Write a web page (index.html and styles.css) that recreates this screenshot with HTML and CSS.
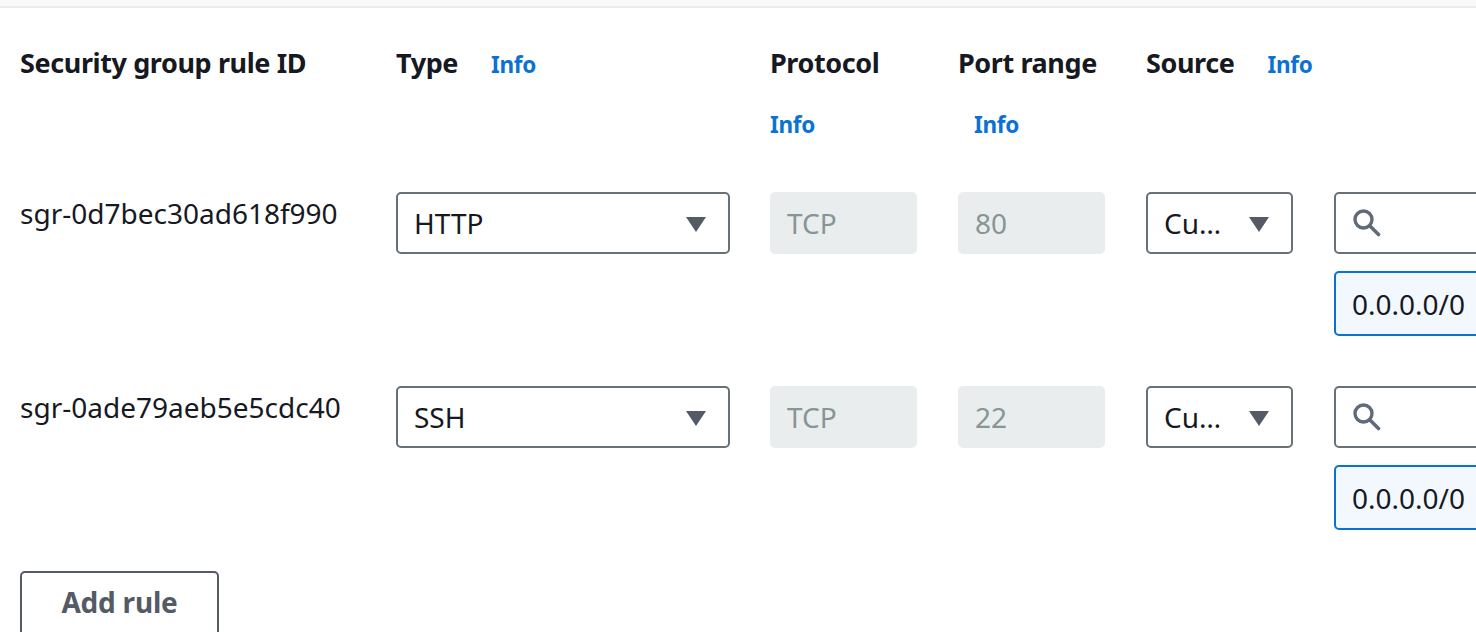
FILE: index.html
```html
<!DOCTYPE html>
<html>
<head>
<meta charset="utf-8">
<link rel="stylesheet" href="styles.css">
</head>
<body>
<div class="topbar"></div>
<div class="content">
  <div class="grid header">
    <div class="hcell"><span class="htext">Security group rule ID</span></div>
    <div class="hcell"><span class="htext">Type</span><a class="info">Info</a></div>
    <div class="hcell"><span class="htext">Protocol</span><a class="info wrap">Info</a></div>
    <div class="hcell"><span class="htext">Port range</span><a class="info wrap indent">Info</a></div>
    <div class="hcell"><span class="htext">Source</span><a class="info">Info</a></div>
    <div class="hcell"></div>
  </div>

  <div class="grid row">
    <div class="rid">sgr-0d7bec30ad618f990</div>
    <div class="select wide"><span>HTTP</span><svg class="caret" width="20" height="16" viewBox="0 0 20 16"><polygon points="0,1 20,1 10,16" /></svg></div>
    <div class="disabled">TCP</div>
    <div class="disabled">80</div>
    <div class="select narrow"><span>Cu…</span><svg class="caret" width="20" height="16" viewBox="0 0 20 16"><polygon points="0,1 20,1 10,16" /></svg></div>
    <div class="srccol">
      <div class="search"><svg width="30" height="30" viewBox="0 0 30 30"><circle cx="11.5" cy="11.5" r="8.5" fill="none" stroke="#5f6b7a" stroke-width="3.4"/><line x1="18" y1="18" x2="26.5" y2="26.5" stroke="#5f6b7a" stroke-width="3.6" stroke-linecap="round"/></svg></div>
      <div class="token">0.0.0.0/0</div>
    </div>
  </div>

  <div class="grid row">
    <div class="rid">sgr-0ade79aeb5e5cdc40</div>
    <div class="select wide"><span>SSH</span><svg class="caret" width="20" height="16" viewBox="0 0 20 16"><polygon points="0,1 20,1 10,16" /></svg></div>
    <div class="disabled">TCP</div>
    <div class="disabled">22</div>
    <div class="select narrow"><span>Cu…</span><svg class="caret" width="20" height="16" viewBox="0 0 20 16"><polygon points="0,1 20,1 10,16" /></svg></div>
    <div class="srccol">
      <div class="search"><svg width="30" height="30" viewBox="0 0 30 30"><circle cx="11.5" cy="11.5" r="8.5" fill="none" stroke="#5f6b7a" stroke-width="3.4"/><line x1="18" y1="18" x2="26.5" y2="26.5" stroke="#5f6b7a" stroke-width="3.6" stroke-linecap="round"/></svg></div>
      <div class="token">0.0.0.0/0</div>
    </div>
  </div>

  <div class="actions">
    <button class="btn">Add rule</button>
  </div>
</div>
</body>
</html>
```

FILE: styles.css
```css
html, body {
  margin: 0;
  padding: 0;
  background: #ffffff;
  overflow: hidden;
  width: 1476px;
  height: 632px;
}
body {
  font-family: "Noto Sans", "Open Sans", sans-serif;
  color: #16191f;
}
.topbar {
  height: 6px;
  background: #f9f9f9;
  border-bottom: 2px solid #e9ebed;
}
.content {
  padding-left: 20px;
  width: 1700px;
}
.grid {
  display: grid;
  grid-template-columns: 376px 374px 188px 188px 188px 400px;
  align-items: start;
}
.header {
  padding-top: 40px;
}
.hcell {
  display: flex;
  flex-wrap: wrap;
  align-items: baseline;
  column-gap: 33px;
  row-gap: 32px;
}
.htext {
  font-size: 27px;
  line-height: 30px;
  font-weight: 700;
  letter-spacing: -0.4px;
  white-space: nowrap;
}
.info {
  font-size: 22.5px;
  line-height: 30px;
  font-weight: 700;
  color: #0972d3;
  letter-spacing: -0.3px;
}
.info.wrap {
  flex-basis: 100%;
}
.info.indent {
  padding-left: 16px;
}
.row {
  margin-top: 50px;
}
.header + .row {
  margin-top: 52px;
}
.rid {
  font-size: 28px;
  line-height: 36px;
  padding-top: 3px;
}
.select {
  box-sizing: border-box;
  height: 62px;
  border: 2px solid #687078;
  border-radius: 5px;
  display: flex;
  align-items: center;
  justify-content: space-between;
  padding: 0 22px 0 16px;
  font-size: 28px;
}
.select.wide { width: 334px; }
.select.narrow { width: 147px; padding-right: 22px; }
.caret polygon { fill: #545b64; }
.caret { margin-top: 2px; }
.disabled {
  box-sizing: border-box;
  width: 147px;
  height: 62px;
  background: #eaeded;
  border-radius: 5px;
  display: flex;
  align-items: center;
  padding-left: 17px;
  font-size: 28px;
  color: #879596;
}
.srccol {
  display: flex;
  flex-direction: column;
  gap: 17px;
}
.search {
  box-sizing: border-box;
  width: 300px;
  height: 62px;
  border: 2px solid #687078;
  border-radius: 5px;
  display: flex;
  align-items: center;
  padding-left: 16px;
}
.token {
  box-sizing: border-box;
  width: 300px;
  height: 65px;
  border: 2px solid #0972d3;
  border-radius: 5px;
  background: #f2f8fd;
  display: flex;
  align-items: center;
  padding-left: 16px;
  font-size: 28px;
}
.actions {
  margin-top: 41px;
}
.btn {
  box-sizing: border-box;
  width: 199px;
  height: 70px;
  border: 2px solid #545b64;
  border-radius: 5px;
  background: #ffffff;
  font-family: "Noto Sans", "Open Sans", sans-serif;
  font-size: 28px;
  font-weight: 700;
  color: #545b64;
  padding: 0 0 8px 0;
  display: flex;
  align-items: center;
  justify-content: center;
  letter-spacing: -0.2px;
}
```
